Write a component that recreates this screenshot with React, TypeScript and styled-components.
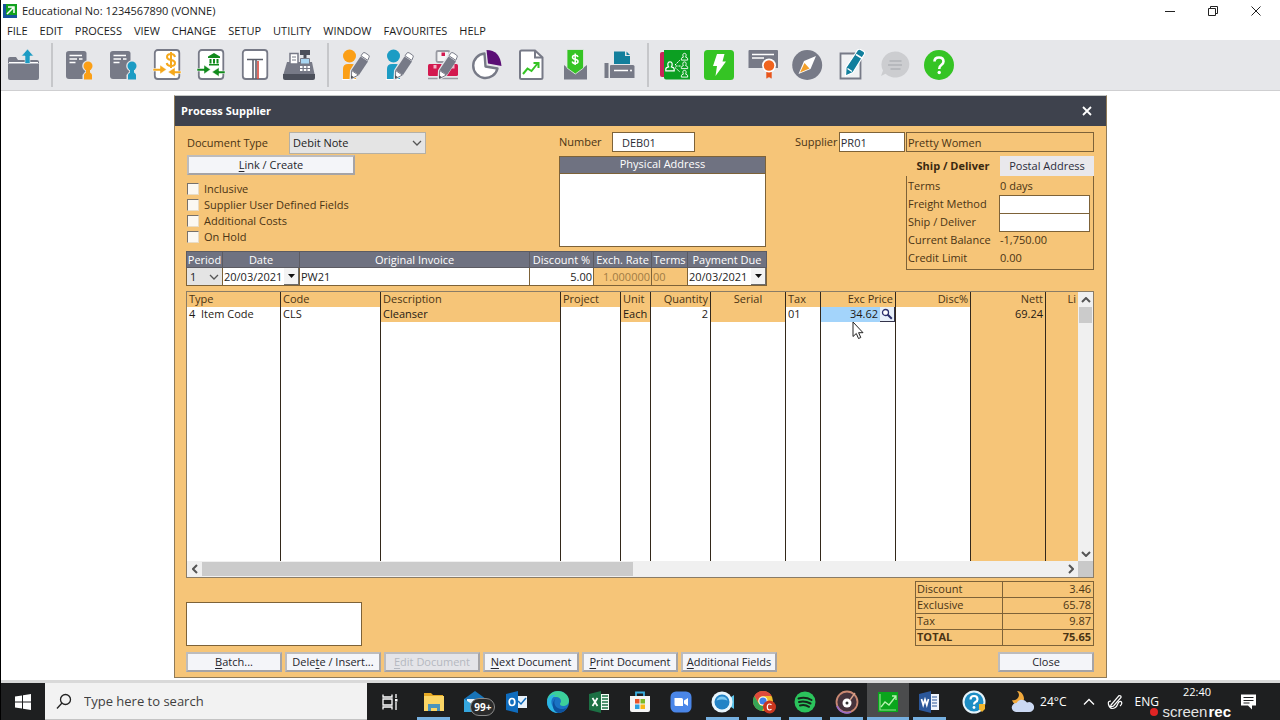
import React from "react";
import styled, { createGlobalStyle, css } from "styled-components";

const color = {
  panel: "#f6c578",
  line: "#7d6238",
  ink: "#4a3414",
  head: "#6f7281",
  slate: "#777a87",
  green: "#35c424",
  teal: "#1c9cc4",
  amber: "#fb9f16",
};

const Global = createGlobalStyle`
  *, *::before, *::after { box-sizing: border-box; }
  body { margin: 0; font: 11px/16px "Open Sans", "Noto Sans", sans-serif; color: #222; background: #fff; }
  button, input, select, textarea { font: inherit; color: inherit; margin: 0; border-radius: 0; }
  button { padding: 0; white-space: nowrap; }
  svg { display: block; flex: none; }
`;

const Page = styled.div`
  min-height: 100vh;
  display: flex;
  flex-direction: column;
  border-left: 1px solid #000;
`;

const TitleBar = styled.header`
  height: 22px;
  display: flex;
  align-items: center;
  padding: 0 3px 0 1px;
`;
const AppTitle = styled.h1`
  margin: 0 auto 0 4px;
  font-size: 11px;
  font-weight: 400;
  color: #222;
`;
const WindowButton = styled.button`
  width: 43px;
  height: 20px;
  border: 0;
  background: none;
  display: grid;
  place-items: center;
`;

const MenuBar = styled.nav`
  height: 18px;
  display: flex;
  align-items: center;
  gap: 12px;
  padding-left: 6px;
`;
const MenuItem = styled.button`
  border: 0;
  background: none;
  color: #1c1c1c;
`;

const Toolbar = styled.div`
  height: 51px;
  display: flex;
  align-items: center;
  background: #e6e7ea;
  border-bottom: 1px solid #cfcfd1;
`;
const ToolGroup = styled.div`
  display: flex;
  padding-right: 6px;
  & + & {
    padding-left: 4px;
    border-left: 2px solid #c6c7ca;
  }
`;
const ToolButton = styled.button`
  width: 44px;
  height: 44px;
  border: 0;
  background: none;
  display: grid;
  place-items: center;
`;

const Workspace = styled.main`
  flex: 1;
  padding: 4px 12px 1px;
`;

const Dialog = styled.section`
  width: 100%;
  max-width: 933px;
  margin: 0 auto;
  background: ${color.panel};
  border: 1px solid #8f7a58;
  border-top-color: #c5c8c6;
  color: ${color.ink};
`;
const DialogHead = styled.div`
  height: 30px;
  padding: 0 13px 0 6px;
  display: flex;
  align-items: center;
  justify-content: space-between;
  background: #3e424d;
  color: #fff;
`;
const DialogTitle = styled.h2`
  margin: 0;
  font-size: 11px;
  font-weight: 700;
`;
const CloseX = styled.button`
  width: 12px;
  height: 20px;
  border: 0;
  background: none;
  display: grid;
  place-items: center;
`;
const DialogBody = styled.div`
  padding: 6px 12px 5px 11px;
`;

const FormArea = styled.div`
  display: flex;
  justify-content: space-between;
`;
const FormMain = styled.div`
  width: 580px;
`;
const FormColumns = styled.div`
  display: flex;
  justify-content: space-between;
  height: 119px;
`;
const DocumentColumn = styled.div`
  width: 240px;
  padding-left: 1px;
`;
const FieldRow = styled.div<{ $height: number }>`
  display: flex;
  align-items: center;
  height: ${(p) => p.$height}px;
`;
const FieldLabel = styled.label<{ $width?: number }>`
  width: ${(p) => (p.$width ? `${p.$width}px` : "auto")};
  white-space: nowrap;
`;

const Drop = styled.span<{ $framed?: boolean }>`
  flex: 1;
  display: grid;
  align-items: center;
  background: #e4e4e4;
  color: #1c1c1c;
  ${(p) => p.$framed && css`border: 1px solid #b5b0a5;`}
  & > * { grid-area: 1 / 1; }
  & > svg { justify-self: end; margin-right: 3px; pointer-events: none; }
`;
const DropSelect = styled.select<{ $height: number }>`
  appearance: none;
  width: 100%;
  height: ${(p) => p.$height}px;
  padding: 0 0 0 3px;
  border: 0;
  background: transparent;
`;

const PushButton = styled.button<{ $width: number }>`
  width: ${(p) => p.$width}px;
  height: 20px;
  line-height: 16px;
  border: 2px solid #bdbcbd;
  border-right-color: #a5a4a7;
  border-bottom-color: #a5a4a7;
  background: #f4f5f9;
  color: #25252c;
  &:disabled { background: #e4e4e8; color: #b4b8c0; }
`;

const Checks = styled.div`
  padding-top: 5px;
`;
const CheckLabel = styled.label`
  display: flex;
  align-items: center;
  gap: 5px;
  height: 16px;
`;
const CheckBox = styled.input`
  appearance: none;
  width: 12px;
  height: 12px;
  margin: 0;
  background: #fbf8f2;
  border: 1px solid #e9dcc5;
  border-top-color: #77716a;
  border-left-color: #77716a;
`;

const AddressColumn = styled.div`
  width: 207px;
`;
const TextField = styled.input<{ $width: number; $indent?: number; $plain?: boolean }>`
  width: ${(p) => p.$width}px;
  height: 20px;
  padding: 0 0 0 ${(p) => p.$indent ?? 1}px;
  border: 1px solid ${color.line};
  background: ${(p) => (p.$plain ? "transparent" : "#fff")};
  color: ${(p) => (p.$plain ? color.ink : "#2b2b33")};
`;
const AddressLabel = styled.label`
  display: block;
  height: 17px;
  margin-top: 4px;
  line-height: 14px;
  text-align: center;
  color: #fff;
  background: ${color.head};
  border: 1px solid ${color.line};
  border-bottom: 0;
`;
const AddressText = styled.textarea`
  display: block;
  width: 100%;
  height: 74px;
  resize: none;
  border: 1px solid ${color.line};
  background: #fff;
`;

const Strip = styled.table`
  width: 100%;
  table-layout: fixed;
  border-collapse: collapse;
  background: #fff;
`;
const StripHead = styled.th`
  height: 16px;
  padding: 0;
  font-weight: 400;
  line-height: 13px;
  color: #fff;
  background: ${color.head};
  border: 1px solid #5c5b62;
  white-space: nowrap;
`;
const StripCell = styled.td<{ $off?: boolean }>`
  height: 18px;
  padding: 0;
  border: 1px solid ${color.line};
  color: ${(p) => (p.$off ? "#a17c44" : "#222")};
  background: ${(p) => (p.$off ? color.panel : "#fff")};
`;
const StripInput = styled.input<{ $end?: boolean }>`
  display: block;
  width: 100%;
  min-width: 0;
  height: 17px;
  padding: 0 1px;
  border: 0;
  background: transparent;
  line-height: 15px;
  text-align: ${(p) => (p.$end ? "right" : "left")};
`;
const DatePicker = styled.div`
  display: flex;
`;
const DateButton = styled.button`
  width: 15px;
  height: 17px;
  flex: none;
  border: 0;
  border-right: 1px solid #6d6d6d;
  border-bottom: 1px solid #6d6d6d;
  background: #f3f3f3;
  display: grid;
  place-items: center;
`;

const SupplierPanel = styled.div`
  width: 299px;
  display: flex;
  flex-direction: column;
  align-items: flex-end;
`;
const SupplierRow = styled.div`
  width: 100%;
  height: 20px;
  display: flex;
  align-items: center;
  justify-content: space-between;
`;
const Tabs = styled.div`
  display: flex;
  width: 188px;
  margin-top: 4px;
`;
const Tab = styled.button<{ $active?: boolean }>`
  flex: 1;
  height: 20px;
  border: 0;
  font-weight: ${(p) => (p.$active ? 700 : 400)};
  color: ${(p) => (p.$active ? "#3a2910" : "#2b2b3a")};
  background: ${(p) => (p.$active ? "transparent" : "#e9e8ec")};
`;
const Details = styled.div`
  width: 188px;
  height: 94px;
  padding: 1px 3px 0 0;
  border: 1px solid ${color.line};
  border-top: 0;
`;
const DetailRow = styled.div`
  height: 18px;
  display: flex;
  align-items: center;
`;
const DetailLabel = styled.label`
  width: 93px;
  padding-left: 1px;
  white-space: nowrap;
`;
const DetailInput = styled.input`
  width: 91px;
  height: 19px;
  border: 1px solid ${color.line};
  background: #fff;
`;

const GridFrame = styled.div`
  margin-top: 5px;
  display: grid;
  grid-template-columns: minmax(0, 1fr) 15px;
  border: 1px solid #8a7c66;
  background: #fff;
`;
const Lines = styled.table`
  width: 100%;
  table-layout: fixed;
  border-collapse: separate;
  border-spacing: 0;
`;
type CellProps = { $end?: boolean; $mid?: boolean; $fill?: string };
const cell = css<CellProps>`
  padding: 0 2px;
  overflow: hidden;
  white-space: pre;
  vertical-align: top;
  font-weight: 400;
  border-right: 1px solid #33281a;
  text-align: ${(p) => (p.$end ? "right" : p.$mid ? "center" : "left")};
  &:last-child { border-right: 0; }
`;
const LineHead = styled.th<CellProps>`
  ${cell}
  height: 15px;
  line-height: 14px;
  color: ${color.ink};
  background: ${color.panel};
`;
const LineCell = styled.td<CellProps>`
  ${cell}
  height: 15px;
  line-height: 14px;
  color: #1f1a14;
  background: ${(p) => p.$fill ?? "#fff"};
`;
const EmptyCell = styled(LineCell)`
  height: 239px;
`;
const PriceCell = styled(LineCell)`
  padding: 0;
  overflow: visible;
  position: relative;
`;
const PriceEdit = styled.div`
  display: flex;
`;
const PriceInput = styled.input`
  width: 100%;
  min-width: 0;
  height: 14px;
  padding: 0 2px 0 0;
  border: 0;
  background: transparent;
  text-align: right;
`;
const LookupButton = styled.button`
  width: 15px;
  height: 15px;
  flex: none;
  border: 0;
  border-right: 1px solid #33334a;
  border-bottom: 1px solid #33334a;
  background: #e8f0fa;
  display: grid;
  place-items: center;
`;
const Pointer = styled.svg`
  position: absolute;
  left: 31px;
  top: 14px;
  z-index: 1;
`;

const VScroll = styled.div`
  display: flex;
  flex-direction: column;
  align-items: center;
  background: #f0f0f0;
`;
const HScroll = styled.div`
  height: 16px;
  display: flex;
  align-items: center;
  background: #f0f0f0;
`;
const ScrollArrow = styled.button`
  width: 15px;
  height: 15px;
  border: 0;
  background: none;
  display: grid;
  place-items: center;
`;
const Thumb = styled.div<{ $vertical?: boolean }>`
  background: #cbcbcb;
  ${(p) => (p.$vertical ? css`width: 13px; height: 16px; margin-bottom: auto;` : css`width: 50%; height: 14px; margin-right: auto;`)}
`;
const HTrack = styled.div`
  flex: 1;
  display: flex;
`;
const ScrollCorner = styled.div`
  background: #c9c9c9;
`;

const Footer = styled.div`
  display: flex;
  justify-content: space-between;
  align-items: flex-end;
  margin-top: 3px;
`;
const NoteBox = styled.textarea`
  display: block;
  width: 176px;
  height: 44px;
  resize: none;
  border: 1px solid ${color.line};
  background: #fff;
`;
const Totals = styled.table`
  width: 179px;
  border-collapse: collapse;
  line-height: 14px;
`;
const TotalName = styled.th<{ $bold?: boolean }>`
  width: 87px;
  padding: 0 0 1px 1px;
  border: 1px solid ${color.line};
  text-align: left;
  font-weight: ${(p) => (p.$bold ? 700 : 400)};
`;
const TotalValue = styled.td<{ $bold?: boolean }>`
  padding: 0 2px 1px 0;
  border: 1px solid ${color.line};
  text-align: right;
  font-weight: ${(p) => (p.$bold ? 700 : 400)};
`;
const ButtonRow = styled.div`
  display: flex;
  gap: 3px;
  margin-top: 6px;
  & > :last-child { margin-left: auto; }
`;

const Taskbar = styled.footer`
  height: 40px;
  display: flex;
  align-items: stretch;
  background: #1e1f20;
  border-top: 3px solid #d9d9d9;
  color: #fff;
`;
const StartButton = styled.button`
  width: 44px;
  border: 0;
  background: none;
  display: grid;
  place-items: center;
`;
const SearchBox = styled.label`
  width: 322px;
  display: flex;
  align-items: center;
  gap: 10px;
  padding-left: 11px;
  background: #f2f2f2;
  border-bottom: 1px solid #c4c4c4;
`;
const SearchInput = styled.input`
  flex: 1;
  min-width: 0;
  border: 0;
  background: none;
  font-size: 13px;
  color: #333;
  &::placeholder { color: #3f3f3f; opacity: 1; }
`;
const TaskApps = styled.div`
  width: 537px;
  display: grid;
  grid-template-columns: repeat(13, 1fr);
`;
const TaskButton = styled.button<{ $open?: boolean; $active?: boolean; $wide?: boolean }>`
  position: relative;
  border: 0;
  width: ${(p) => (p.$wide ? "46px" : "auto")};
  display: grid;
  place-items: center;
  background: ${(p) => (p.$active ? "#4b4c4d" : "none")};
  &::after {
    content: "";
    display: ${(p) => (p.$open ? "block" : "none")};
    position: absolute;
    left: ${(p) => (p.$active ? 0 : 4)}px;
    right: ${(p) => (p.$active ? 0 : 4)}px;
    bottom: 0;
    height: 3px;
    background: #76b0e0;
  }
`;
const MailBadge = styled.span`
  position: absolute;
  left: 16px;
  top: 15px;
  height: 18px;
  padding: 0 3px;
  border: 1px solid #8a8a8a;
  border-radius: 9px;
  background: #2b2b2b;
  font-size: 10px;
  font-weight: 700;
  line-height: 16px;
  color: #fff;
`;
const Tray = styled.div`
  flex: 1;
  display: flex;
  align-items: center;
  justify-content: flex-end;
  position: relative;
  padding-right: 22px;
  font-size: 12px;
`;
const TrayButton = styled.button<{ $gap: number }>`
  border: 0;
  background: none;
  color: #fff;
  display: flex;
  align-items: center;
  gap: 6px;
  margin-right: ${(p) => p.$gap}px;
`;
const Clock = styled.time`
  align-self: flex-start;
  margin-right: 29px;
  line-height: 18px;
  font-size: 11px;
`;
const Watermark = styled.div`
  position: absolute;
  right: 49px;
  bottom: 0;
  display: flex;
  align-items: center;
  font: 15px/17px "Liberation Sans", Arial, sans-serif;
  color: #e4e4e4;
  &::before {
    content: "";
    width: 8px;
    height: 8px;
    margin-right: 4px;
    border-radius: 50%;
    background: #e02424;
  }
  b { margin-left: 1px; color: #fff; }
`;

const Icon = ({ children, size = 32, box = 32 }: { children: React.ReactNode; size?: number; box?: number }) => (
  <svg width={size} height={size} viewBox={`0 0 ${box} ${box}`} fill="none" aria-hidden="true">
    {children}
  </svg>
);
const Chevron = ({ d = "M1 1l4 4 4-4", w = 10, h = 6, bold }: { d?: string; w?: number; h?: number; bold?: boolean }) => (
  <svg width={w} height={h} viewBox={`0 0 ${w} ${h}`} fill="none" stroke="#555" strokeWidth={bold ? 2 : 1.3} aria-hidden="true">
    <path d={d} />
  </svg>
);
const Triangle = () => (
  <svg width="7" height="4" viewBox="0 0 7 4" aria-hidden="true"><path d="M0 0h7L3.500 4z" fill="#111" /></svg>
);

const S = color.slate;
const Pencil = () => (
  <g>
    <path d="M23 4l7.500 5-11.500 17.500-7.500 4 .5-9z" fill="#e6e7ea" stroke="#e6e7ea" strokeWidth="2" />
    <path d="M21.500 7.500l7.500 5-9 13.500-7.500-5z" fill={S} />
    <path d="M22 6.800l1.800-2.600q1-1.200 2.400-.3l3.400 2.200q1.200.9.4 2.200L28.800 11.300z" fill="#fff" stroke={S} strokeWidth="1" />
    <path d="M12.600 21.500l6.700 4.500-6.800 3.600z" fill="#fff" stroke={S} strokeWidth="1" />
    <path d="M12.300 26.500l2.400 1.600-2.500 1.500z" fill="#444" />
  </g>
);
const Contact = ({ tint }: { tint: string }) => (
  <Icon>
    <circle cx="10.500" cy="7" r="6.500" fill={tint} />
    <path d="M4 30V20q0-5 5-5h4q4 0 4 5v10z" fill={tint} />
    <path d="M3 30.500h14" stroke="#fff" />
    <Pencil />
  </Icon>
);
const DocPerson = ({ tint }: { tint: string }) => (
  <Icon>
    <path d="M6 2h15q2.500 0 2.500 2.500V30H6q-3 0-3-3V4.500Q3 2 6 2z" fill={S} />
    <path d="M6.500 6.500h12.500M6.500 10h7.500M16 10h3.500M6.500 13.500h6" stroke="#fff" strokeWidth="1.500" />
    <circle cx="25" cy="17" r="5.800" fill="#e6e7ea" />
    <path d="M19.500 32v-6l4-5h4l3.500 5v6z" fill="#e6e7ea" />
    <circle cx="25" cy="17" r="4.500" fill={tint} />
    <path d="M21 30.500v-4.500q0-1.500 2-2.500v-3h4v3q2 1 2 2.500v4.500z" fill={tint} />
  </Icon>
);
const PageFrame = () => <rect x="3.800" y="1" width="24.500" height="29" rx="3" fill="#fff" stroke={S} strokeWidth="1.800" />;
const TransferArrows = ({ tint }: { tint: string }) => (
  <g fill={tint}>
    <path d="M2 19.500h7v-3.500l6.500 4.500L9 25v-3H2z" stroke="#fff" strokeWidth=".5" />
    <path d="M30 22h-6v-3.500l-7 4.500 7 4.500v-3h6z" stroke="#fff" strokeWidth=".5" />
  </g>
);
const MiniPerson = ({ x, y, s = 1 }: { x: number; y: number; s?: number }) => (
  <path
    transform={`translate(${x} ${y}) scale(${s})`}
    d="M-3.500 4v-1.500q0-1.200 2.300-1.800Q-2-.5-1.800-2 -1.500-3.500 0-3.500T1.800-2Q2-.5 1.200.7 3.500 1.300 3.500 2.500V4z"
    stroke="#fff" strokeWidth="1"
  />
);

const toolGroups: { name: string; art: React.ReactNode }[][] = [
  [
    {
      name: "Open",
      art: (
        <Icon>
          <path d="M1 13V10q0-2 2-2h6l2 3h19q2 0 2 2v1H1z" fill={S} />
          <path d="M2 13h29v1.500H2z" fill="#fff" />
          <path d="M1 14.500h31V29q0 2-2 2H3q-2 0-2-2z" fill={S} />
          <path d="M20.500 0l6 7h-3.500v7.500h-5V7h-3.500z" fill={color.teal} stroke="#e6e7ea" strokeWidth=".6" />
        </Icon>
      ),
    },
  ],
  [
    { name: "Customers", art: <DocPerson tint={color.amber} /> },
    { name: "Suppliers", art: <DocPerson tint={color.teal} /> },
    {
      name: "Cash",
      art: (
        <Icon>
          <PageFrame />
          <path d="M24 8q-.5-3-4-3-4 0-4 3 0 2.300 4 3t4 3q0 3-4 3-3.700 0-4.300-3M20 3v16" stroke="#f5a81c" strokeWidth="2" />
          <TransferArrows tint="#f5a81c" />
        </Icon>
      ),
    },
    {
      name: "Bank",
      art: (
        <Icon>
          <PageFrame />
          <path d="M19 4l6 3.500v1.500H13V7.500zM14 15h10v1.500H14zM14.500 10h2v4.500h-2zM18 10h2v4.500h-2zM21.500 10h2v4.500h-2z" fill="#118a1c" />
          <TransferArrows tint="#118a1c" />
        </Icon>
      ),
    },
    {
      name: "Journal",
      art: (
        <Icon>
          <PageFrame />
          <path d="M8 10.500h16M14 11v19M17 11v19" stroke="#5d606b" strokeWidth="1.600" />
          <path d="M19 12v18" stroke="#d8463a" strokeWidth="1.600" />
        </Icon>
      ),
    },
    {
      name: "Point of Sale",
      art: (
        <Icon>
          <path d="M17 1h10v5h-3.500v4h-3V6H17z" fill="#4c505b" />
          <path d="M4 13h25l2.500 12h-31z" fill={S} />
          <path d="M7 4.500h8V15H7z" fill="#fff" stroke={S} strokeWidth="1.500" />
          <path d="M9 8h4M9 11h4" stroke={S} />
          <path d="M17.500 9.500h9V15h-9z" fill="#a8d6f2" stroke={S} />
          <path d="M17 18h2.500M20.800 18h2.500M24.500 18h2.500M17 21h2.500M20.800 21h2.500M24.500 21h2.500" stroke="#fff" strokeWidth="2" />
          <path d="M0 25h32v4q0 2-2 2H2q-2 0-2-2z" fill="#4c505b" />
        </Icon>
      ),
    },
  ],
  [
    { name: "Edit Customer", art: <Contact tint={color.amber} /> },
    { name: "Edit Supplier", art: <Contact tint={color.teal} /> },
    {
      name: "Edit Inventory",
      art: (
        <Icon>
          <rect x="9.500" y="2" width="13" height="11" rx="1.500" fill="#f4f4f5" stroke="#999ba3" strokeWidth="1.800" />
          <path d="M14.500 3.500h3.500v3.500h-3.500z" fill="#d3194f" />
          <rect x="1" y="15" width="14.500" height="12" rx="1.500" fill="#d3194f" />
          <rect x="16.500" y="15" width="14.500" height="12" rx="1.500" fill="#d3194f" />
          <path d="M6.500 16h3v3.500h-3zM24.500 16h3v3.500h-3z" fill="#f3b3c6" />
          <path d="M1 29.500h30" stroke="#999ba3" strokeWidth="1.500" />
          <Pencil />
        </Icon>
      ),
    },
    {
      name: "Analysis",
      art: (
        <Icon>
          <path d="M13.500 4.500A12.300 12.300 0 1 0 26.500 19.500L14.500 17.500z" fill="#fff" stroke={S} strokeWidth="2.400" strokeLinejoin="round" />
          <path d="M15.500 1Q29 1 30.500 17L17 14.500z" fill="#5b0e75" />
        </Icon>
      ),
    },
    {
      name: "Reports",
      art: (
        <Icon>
          <path d="M5 3q0-1.500 1.500-1.500H20l7.500 7V28.500q0 1.500-1.500 1.500H6.500Q5 30 5 28.500z" fill="#fff" stroke={S} strokeWidth="2" />
          <path d="M20 2v6.500h7" stroke={S} strokeWidth="2" />
          <path d="M8 25l4.500-5.500 4 2.500 6-7.500M18.500 14h5v5" stroke={color.green} strokeWidth="2" />
        </Icon>
      ),
    },
    {
      name: "Receive Payment",
      art: (
        <Icon>
          <path d="M5 16l11 9 12-9v14.500H5z" fill={S} />
          <path d="M8 .5h16.500V19l-8.200 6L8 19z" fill={color.green} stroke="#e6e7ea" strokeWidth=".8" />
          <path d="M19 8q-.5-1.800-2.800-1.800-2.700 0-2.700 2 0 1.600 2.700 2.100t2.800 2.200q0 2-2.800 2-2.500 0-3-2M16.200 4.500V16" stroke="#fff" strokeWidth="1.500" />
        </Icon>
      ),
    },
    {
      name: "Print",
      art: (
        <Icon>
          <path d="M11 2.500h11V7h5v8H11z" fill="#137f9c" />
          <path d="M23.500 2.500L27 6h-3.500z" fill="#137f9c" />
          <path d="M8 16h22q1.500 0 1.500 1.500V29H7V17q0-1 1-1z" fill={S} />
          <path d="M1.500 14H5.500V29h-4z" fill={S} />
          <path d="M11 21.500h14" stroke="#fff" strokeWidth="1.500" />
          <circle cx="28" cy="21.500" r="1" fill="#fff" />
        </Icon>
      ),
    },
  ],
  [
    {
      name: "Contacts",
      art: (
        <Icon>
          <path d="M6 3H3Q1 3 1 5v21q0 2 2 2h3z" fill="#c92458" />
          <path d="M5 1h26v29.500H7q-2 0-2-2z" fill="#0c9f22" />
          <path d="M16 16l5-5M16.500 17h5M16 18.500l5 4.500" stroke="#fff" strokeDasharray="2 1" />
          <MiniPerson x={11} y={17} s={1.2} />
          <MiniPerson x={25.5} y={7.5} s={0.9} />
          <MiniPerson x={25.5} y={16} s={0.9} />
          <MiniPerson x={25.5} y={24.5} s={0.9} />
        </Icon>
      ),
    },
    {
      name: "Quick Launch",
      art: (
        <Icon>
          <rect x="1" y="1" width="30" height="30" rx="3.500" fill={color.green} />
          <path d="M14 5h7.500l-2 7.500h3.500L12.500 27l1.500-10h-4z" fill="#fff" />
        </Icon>
      ),
    },
    {
      name: "Licence",
      art: (
        <Icon>
          <path d="M2.500 1H30q1 0 1 1v17H1.500V2q0-1 1-1z" fill={S} />
          <path d="M5 5.500h22M5 9h12" stroke="#fff" strokeWidth="1.500" />
          <path d="M19 20h6v10l-3-1.500-3 1.500z" fill="#e8541b" stroke="#e6e7ea" strokeWidth=".6" />
          <circle cx="22" cy="16.500" r="7" fill="#fff" />
          <circle cx="22" cy="16.500" r="5.300" fill="#f0641e" />
        </Icon>
      ),
    },
    {
      name: "Navigator",
      art: (
        <Icon>
          <circle cx="16.200" cy="16" r="15" fill={S} />
          <path d="M25 7L19.500 20 7.500 25l5.500-13z" fill="#fff" />
          <path d="M13.500 14l5 5.500-9.500 4z" fill="#f3a02a" />
        </Icon>
      ),
    },
    {
      name: "Notes",
      art: (
        <Icon>
          <path d="M5.500 4.500h20v25h-20z" fill="#f1f2f4" stroke={S} strokeWidth="1.800" />
          <path d="M20 5l2.500-4q1.500-1.500 3-.5l3 1.800q1.800 1.200.8 3L18 23.500 10.500 27l.5-8.500z" fill="#117f9d" stroke="#fff" strokeWidth="1.200" />
          <path d="M21 5.500l6.500 4M12.500 19.500l4.500 3" stroke="#fff" strokeWidth="1.500" />
        </Icon>
      ),
    },
    {
      name: "Messages",
      art: (
        <Icon>
          <path d="M16 2.500a14 13 0 1 1-9.500 22.300L2 27l2-5.500A14 13 0 0 1 16 2.500z" fill="#cccdd0" />
          <path d="M10.500 12h12M9 16h14M11.500 20h10" stroke="#b0b2b7" strokeWidth="1.400" />
        </Icon>
      ),
    },
    {
      name: "Help",
      art: (
        <Icon>
          <circle cx="16" cy="16" r="15" fill={color.green} />
          <path d="M11.500 12.500Q11.500 8.500 16 8.500t4.500 4q0 2-2.200 3.500T16.200 20" stroke="#fff" strokeWidth="2.600" />
          <circle cx="16.200" cy="23.500" r="1.700" fill="#fff" />
        </Icon>
      ),
    },
  ],
];

const OfficeTile = ({ tint, page, mark }: { tint: string; page: React.ReactNode; mark: string }) => (
  <Icon size={24} box={24}>
    {page}
    <path d="M2 4l12-3v22L2 20z" fill={tint} />
    <path d={mark} stroke="#fff" strokeWidth="1.700" />
  </Icon>
);

const taskApps: { name: string; art: React.ReactNode; open?: boolean; active?: boolean; badge?: string }[] = [
  {
    name: "File Explorer", open: true,
    art: (
      <Icon size={24} box={24}>
        <path d="M2 3h7l2 2h10v5H2z" fill="#e5a823" />
        <path d="M2 6h20v15H2z" fill="#fbd565" />
        <path d="M6 14h12v7h-3v-3H9v3H6z" fill="#4a94bd" />
      </Icon>
    ),
  },
  {
    name: "Mail", badge: "99+",
    art: (
      <Icon size={24} box={24}>
        <path d="M1 9l11-8 11 8v13H1z" fill="#1874b8" />
        <path d="M4 9h16v8H4z" fill="#e9f3fa" />
        <path d="M1 9l11 7 11-7v13H1z" fill="#35a6de" />
      </Icon>
    ),
  },
  {
    name: "Outlook",
    art: (
      <OfficeTile
        tint="#0f6cbd"
        page={<g><path d="M12 6h11v12H12z" fill="#e8f1fa" /><path d="M14 11l3 3 5-6" stroke="#0f6cbd" strokeWidth="1.500" /></g>}
        mark="M8 8.500c-2 0-2.800 1.700-2.800 3.500S6 15.500 8 15.500s2.800-1.700 2.800-3.500S10 8.500 8 8.500z"
      />
    ),
  },
  {
    name: "Edge",
    art: (
      <Icon size={24} box={24}>
        <circle cx="12" cy="12" r="11" fill="#1a73c4" />
        <path d="M1 12C1 5 6 1 12 1s11 4.500 11 9.500c0 4-3 5.500-6 5.500-2 0-3-1-3-2s1-1.500 1-3c0-2-2-4-5-4-4 0-8 2-9 5z" fill="#3ccf9a" />
        <path d="M1 12C2 6 6 4 10 5c-4 2-5.500 6-4 10 1 3 4 6 8 7.700C7 24 1 19 1 12z" fill="#2cb5e4" />
        <path d="M10 8c-3 3-2 9 3 10.500 3 1 6 .5 8-1-2 4-6 5.500-9 5.500C6 21 5 12 10 8z" fill="#0d529e" />
      </Icon>
    ),
  },
  {
    name: "Excel",
    art: (
      <OfficeTile
        tint="#1c7044"
        page={<g><path d="M12 4h10v16H12z" fill="#f3faf5" /><path d="M15 6h6M15 9h6M15 12h6M15 15h6M15 18h6" stroke="#1c7044" strokeWidth="1.500" /></g>}
        mark="M5.500 8l5 8M10.500 8l-5 8"
      />
    ),
  },
  {
    name: "Microsoft Store",
    art: (
      <Icon size={24} box={24}>
        <path d="M8 6V2.500h8V6" stroke="#3aaee0" strokeWidth="1.800" />
        <path d="M2 6h20v14q0 2-2 2H4q-2 0-2-2z" fill="#f5f5f5" />
        <path d="M7 9h4.500v4.500H7z" fill="#e9532a" /><path d="M12.500 9H17v4.500h-4.500z" fill="#7bb927" />
        <path d="M7 14.500h4.500V19H7z" fill="#2a9fe0" /><path d="M12.500 14.500H17V19h-4.500z" fill="#f7b718" />
      </Icon>
    ),
  },
  {
    name: "Zoom",
    art: (
      <Icon size={24} box={24}>
        <rect x="1.500" y="1.500" width="21" height="21" rx="5.500" fill="#4a86e8" />
        <path d="M5.500 8h7q1.500 0 1.500 1.500V16H7q-1.500 0-1.500-1.500zM15 10.500L19 8v8l-4-2.500z" fill="#fff" />
      </Icon>
    ),
  },
  {
    name: "Meetings", open: true,
    art: (
      <Icon size={24} box={24}>
        <path d="M17 9l6-4v14l-6-4z" fill="#5cc3ea" />
        <circle cx="11" cy="12" r="10.500" fill="#e9f6fd" />
        <circle cx="11" cy="12" r="7.500" fill="#2383c6" />
        <path d="M5.500 10.500a5.800 5.800 0 0 1 11 0q-5.500-2-11 0z" fill="#7cc8f0" />
      </Icon>
    ),
  },
  {
    name: "Chrome", open: true,
    art: (
      <Icon size={24} box={24}>
        <circle cx="11" cy="11" r="10" fill="#f2bd2d" />
        <path d="M2.300 6A10 10 0 0 1 19.700 6H11a5 5 0 0 0-4.300 7.500z" fill="#de4a3c" />
        <path d="M2.300 6l4.400 7.500A5 5 0 0 0 13 15.500L10 21A10 10 0 0 1 2.300 6z" fill="#36a457" />
        <circle cx="11" cy="11" r="4.600" fill="#fff" />
        <circle cx="11" cy="11" r="3.600" fill="#3f7fe8" />
        <circle cx="17.500" cy="17" r="6.500" fill="#c9361f" />
        <path d="M19.500 15q-.8-1-2-1-2.200 0-2.200 3t2.200 3q1.200 0 2-1" stroke="#fff" strokeWidth="1.200" />
      </Icon>
    ),
  },
  {
    name: "Spotify", open: true,
    art: (
      <Icon size={24} box={24}>
        <circle cx="12" cy="12" r="10.500" fill="#2bc45c" />
        <path d="M5.500 8.500q7-2 13 1.500M6 12q6-1.500 11.500 1.500M7 15.500q5-1.200 9 1.300" stroke="#16261b" strokeWidth="2" strokeLinecap="round" />
      </Icon>
    ),
  },
  {
    name: "Music", open: true,
    art: (
      <Icon size={24} box={24}>
        <circle cx="12" cy="12" r="10.500" fill="#46333c" stroke="#c98872" strokeWidth="1.800" />
        <path d="M2 16A10.500 10.500 0 0 0 16 22" stroke="#9a6bc4" strokeWidth="1.800" />
        <circle cx="12" cy="13" r="4.500" fill="#fff" />
        <circle cx="12" cy="13" r="1.500" fill="#333" />
        <path d="M15 10l5-7" stroke="#d9a58c" strokeWidth="1.300" />
      </Icon>
    ),
  },
  {
    name: "Accounting", open: true, active: true,
    art: (
      <Icon size={24} box={24}>
        <path d="M2 2h20v20H2z" fill="#0aa51c" />
        <path d="M4 4v16h16" stroke="#8fe58d" strokeWidth="1.200" />
        <path d="M5 17l4-5 4 3 7-9M16 6h4v4" stroke="#b7f3b0" strokeWidth="1.300" />
      </Icon>
    ),
  },
  {
    name: "Word", open: true,
    art: (
      <OfficeTile
        tint="#2b579a"
        page={<g><path d="M12 4h10v16H12z" fill="#eef3fb" /><path d="M15 7h5M15 10h5M15 13h5M15 16h5" stroke="#2b579a" strokeWidth="1.200" /></g>}
        mark="M4.500 9l1.700 6L8 9.500 9.800 15l1.700-6"
      />
    ),
  },
];

const Key = styled.u`
  text-underline-offset: 2px;
`;

const menus = ["FILE", "EDIT", "PROCESS", "VIEW", "CHANGE", "SETUP", "UTILITY", "WINDOW", "FAVOURITES", "HELP"];
const stripColumns: [string, number][] = [
  ["Period", 36], ["Date", 77], ["Original Invoice", 230], ["Discount %", 64],
  ["Exch. Rate", 58], ["Terms", 36], ["Payment Due", 79],
];
type Column = { title: string; width?: number; value: string; end?: boolean; mid?: boolean; locked?: boolean; band?: boolean };
const columns: Column[] = [
  { title: "Type", width: 94, value: "4  Item Code" },
  { title: "Code", width: 100, value: "CLS" },
  { title: "Description", width: 180, value: "Cleanser", locked: true },
  { title: "Project", width: 60, value: "" },
  { title: "Unit", width: 30, value: "Each", locked: true },
  { title: "Quantity", width: 60, value: "2", end: true },
  { title: "Serial", width: 75, value: "", mid: true, locked: true },
  { title: "Tax", width: 35, value: "01" },
  { title: "Exc Price", width: 75, value: "34.62", end: true },
  { title: "Disc%", width: 75, value: "", end: true },
  { title: "Nett", width: 75, value: "69.24", end: true, band: true },
  { title: "Li", value: "", end: true, band: true },
];
const totals = [["Discount", "3.46"], ["Exclusive", "65.78"], ["Tax", "9.87"], ["TOTAL", "75.65"]];

export default function App() {
  return (
    <Page>
      <Global />
      <TitleBar>
        <Icon size={16} box={16}>
          <path d="M1 1h14v14H1z" fill="#12a11f" />
          <path d="M1 1h3v14H1zM1 12h14v3H1z" fill="#17549a" />
          <path d="M5 11l6-6M6 4h6v6" stroke="#fff" strokeWidth="1.500" />
        </Icon>
        <AppTitle>Educational No: 1234567890 (VONNE)</AppTitle>
        <WindowButton aria-label="Minimize"><Icon size={12} box={12}><path d="M1 6.500h10" stroke="#222" /></Icon></WindowButton>
        <WindowButton aria-label="Restore">
          <Icon size={12} box={12}><path d="M1.500 3.500h7v7h-7zM3.500 3.500v-2h7v7h-2" stroke="#222" /></Icon>
        </WindowButton>
        <WindowButton aria-label="Close window"><Icon size={12} box={12}><path d="M1.500 1.500l9 9M10.500 1.500l-9 9" stroke="#222" /></Icon></WindowButton>
      </TitleBar>
      <MenuBar>
        {menus.map((m) => <MenuItem key={m}>{m}</MenuItem>)}
      </MenuBar>
      <Toolbar>
        {toolGroups.map((group, i) => (
          <ToolGroup key={i}>
            {group.map((tool) => <ToolButton key={tool.name} aria-label={tool.name}>{tool.art}</ToolButton>)}
          </ToolGroup>
        ))}
      </Toolbar>

      <Workspace>
        <Dialog>
          <DialogHead>
            <DialogTitle>Process Supplier</DialogTitle>
            <CloseX aria-label="Close dialog"><Icon size={10} box={10}><path d="M1 1l8 8M9 1L1 9" stroke="#fff" strokeWidth="1.800" /></Icon></CloseX>
          </DialogHead>
          <DialogBody>
            <FormArea>
              <FormMain>
                <FormColumns>
                  <DocumentColumn>
                    <FieldRow $height={22}>
                      <FieldLabel htmlFor="doc-type" $width={102}>Document Type</FieldLabel>
                      <Drop $framed>
                        <DropSelect id="doc-type" $height={20}><option>Debit Note</option></DropSelect>
                        <Chevron />
                      </Drop>
                    </FieldRow>
                    <FieldRow $height={22}>
                      <PushButton $width={168}><Key>L</Key>ink / Create</PushButton>
                    </FieldRow>
                    <Checks>
                      {["Inclusive", "Supplier User Defined Fields", "Additional Costs", "On Hold"].map((t) => (
                        <CheckLabel key={t}><CheckBox type="checkbox" />{t}</CheckLabel>
                      ))}
                    </Checks>
                  </DocumentColumn>
                  <AddressColumn>
                    <FieldRow $height={20}>
                      <FieldLabel htmlFor="number" $width={53}>Number</FieldLabel>
                      <TextField id="number" $width={83} $indent={9} defaultValue="DEB01" />
                    </FieldRow>
                    <AddressLabel htmlFor="address">Physical Address</AddressLabel>
                    <AddressText id="address" />
                  </AddressColumn>
                </FormColumns>
                <Strip>
                  <colgroup>{stripColumns.map(([n, w]) => <col key={n} width={w} />)}</colgroup>
                  <thead><tr>{stripColumns.map(([n]) => <StripHead key={n}>{n}</StripHead>)}</tr></thead>
                  <tbody>
                    <tr>
                      <StripCell>
                        <Drop>
                          <DropSelect $height={17} aria-label="Period"><option>1</option></DropSelect>
                          <Chevron />
                        </Drop>
                      </StripCell>
                      <StripCell>
                        <DatePicker>
                          <StripInput aria-label="Date" defaultValue="20/03/2021" />
                          <DateButton aria-label="Pick date"><Triangle /></DateButton>
                        </DatePicker>
                      </StripCell>
                      <StripCell><StripInput aria-label="Original Invoice" defaultValue="PW21" /></StripCell>
                      <StripCell><StripInput $end aria-label="Discount %" defaultValue="5.00" /></StripCell>
                      <StripCell $off><StripInput $end aria-label="Exchange rate" defaultValue="1.000000" readOnly /></StripCell>
                      <StripCell $off><StripInput aria-label="Terms" defaultValue="00" readOnly /></StripCell>
                      <StripCell>
                        <DatePicker>
                          <StripInput aria-label="Payment Due" defaultValue="20/03/2021" />
                          <DateButton aria-label="Pick payment date"><Triangle /></DateButton>
                        </DatePicker>
                      </StripCell>
                    </tr>
                  </tbody>
                </Strip>
              </FormMain>

              <SupplierPanel>
                <SupplierRow>
                  <FieldLabel htmlFor="supplier">Supplier</FieldLabel>
                  <TextField id="supplier" $width={66} defaultValue="PR01" />
                  <TextField $width={188} $plain aria-label="Supplier name" defaultValue="Pretty Women" readOnly />
                </SupplierRow>
                <Tabs>
                  <Tab $active>Ship / Deliver</Tab>
                  <Tab>Postal Address</Tab>
                </Tabs>
                <Details>
                  <DetailRow><DetailLabel as="span">Terms</DetailLabel>0 days</DetailRow>
                  <DetailRow><DetailLabel htmlFor="freight">Freight Method</DetailLabel><DetailInput id="freight" /></DetailRow>
                  <DetailRow><DetailLabel htmlFor="ship">Ship / Deliver</DetailLabel><DetailInput id="ship" /></DetailRow>
                  <DetailRow><DetailLabel as="span">Current Balance</DetailLabel>-1,750.00</DetailRow>
                  <DetailRow><DetailLabel as="span">Credit Limit</DetailLabel>0.00</DetailRow>
                </Details>
              </SupplierPanel>
            </FormArea>

            <GridFrame>
              <Lines>
                <colgroup>{columns.map((c) => <col key={c.title} width={c.width} />)}</colgroup>
                <thead>
                  <tr>{columns.map((c) => <LineHead key={c.title} $end={c.end} $mid={c.mid}>{c.title}</LineHead>)}</tr>
                </thead>
                <tbody>
                  <tr>
                    {columns.map((c) =>
                      c.title === "Exc Price" ? (
                        <PriceCell key={c.title} $fill="#a3d4fb">
                          <PriceEdit>
                            <PriceInput aria-label="Exc Price" defaultValue={c.value} />
                            <LookupButton aria-label="Look up price">
                              <Icon size={12} box={12}>
                                <circle cx="4.500" cy="4.500" r="3" fill="#fff" stroke="#2b2f6b" strokeWidth="1.300" />
                                <path d="M6.800 6.800l4 4" stroke="#2b2f6b" strokeWidth="2" />
                              </Icon>
                            </LookupButton>
                          </PriceEdit>
                          <Pointer width="12" height="19" viewBox="0 0 12 19" aria-hidden="true">
                            <path d="M1 1v14.500l3.300-3 2.200 5 2.300-1-2.200-4.800H11z" fill="#fff" stroke="#222" />
                          </Pointer>
                        </PriceCell>
                      ) : (
                        <LineCell key={c.title} $end={c.end} $fill={c.locked || c.band ? color.panel : undefined}>{c.value}</LineCell>
                      )
                    )}
                  </tr>
                  <tr>{columns.map((c) => <EmptyCell key={c.title} $fill={c.band ? color.panel : undefined} />)}</tr>
                </tbody>
              </Lines>
              <VScroll>
                <ScrollArrow aria-label="Scroll up"><Chevron bold d="M1 5l4-4 4 4" /></ScrollArrow>
                <Thumb $vertical />
                <ScrollArrow aria-label="Scroll down"><Chevron bold /></ScrollArrow>
              </VScroll>
              <HScroll>
                <ScrollArrow aria-label="Scroll left"><Chevron bold w={6} h={10} d="M5 1L1 5l4 4" /></ScrollArrow>
                <HTrack><Thumb /></HTrack>
                <ScrollArrow aria-label="Scroll right"><Chevron bold w={6} h={10} d="M1 1l4 4-4 4" /></ScrollArrow>
              </HScroll>
              <ScrollCorner />
            </GridFrame>

            <Footer>
              <NoteBox aria-label="Notes" />
              <Totals>
                <tbody>
                  {totals.map(([n, v]) => (
                    <tr key={n}>
                      <TotalName scope="row" $bold={n === "TOTAL"}>{n}</TotalName>
                      <TotalValue $bold={n === "TOTAL"}>{v}</TotalValue>
                    </tr>
                  ))}
                </tbody>
              </Totals>
            </Footer>
            <ButtonRow>
              <PushButton $width={96}><Key>B</Key>atch...</PushButton>
              <PushButton $width={96}>Dele<Key>t</Key>e / Insert...</PushButton>
              <PushButton $width={96} disabled><Key>E</Key>dit Document</PushButton>
              <PushButton $width={96}><Key>N</Key>ext Document</PushButton>
              <PushButton $width={96}><Key>P</Key>rint Document</PushButton>
              <PushButton $width={96}><Key>A</Key>dditional Fields</PushButton>
              <PushButton $width={96}>Close</PushButton>
            </ButtonRow>
          </DialogBody>
        </Dialog>
      </Workspace>

      <Taskbar>
        <StartButton aria-label="Start">
          <Icon size={16} box={16}><path d="M0 2.500l7-1v6H0zM8 1.300L16 0v7.500H8zM0 8.500h7v6l-7-1zM8 8.500h8V16l-8-1.300z" fill="#fff" /></Icon>
        </StartButton>
        <SearchBox>
          <Icon size={16} box={16}><circle cx="9.500" cy="6.500" r="5" stroke="#222" strokeWidth="1.300" /><path d="M6 10l-5 5.500" stroke="#222" strokeWidth="1.300" /></Icon>
          <SearchInput type="text" placeholder="Type here to search" />
        </SearchBox>
        <TaskButton $wide aria-label="Task View">
          <Icon size={18} box={18}>
            <path d="M2 1.500v2.500h9V1.500M2 16.500V14h9v2.500M2 6h9v6H2zM15 1v4M15 9v8" stroke="#fff" strokeWidth="1.300" />
            <path d="M14 6h2.500v2.500H14z" fill="#fff" />
          </Icon>
        </TaskButton>
        <TaskApps>
          {taskApps.map((a) => (
            <TaskButton key={a.name} aria-label={a.name} $open={a.open} $active={a.active}>
              {a.art}
              {a.badge && <MailBadge>{a.badge}</MailBadge>}
            </TaskButton>
          ))}
        </TaskApps>
        <Tray>
          <TrayButton $gap={24} aria-label="Tips">
            <Icon size={24} box={24}>
              <circle cx="12" cy="12" r="10.500" fill="#1d8dc4" stroke="#e6f4fb" strokeWidth="2" />
              <path d="M8.500 9.500q0-3.500 3.500-3.500t3.500 3.200q0 2-2 2.800-1.500.8-1.500 2.500" stroke="#fff" strokeWidth="2.200" />
              <circle cx="12" cy="17.500" r="1.400" fill="#fff" />
              <path d="M17 14h6v5l-3 3-3-3z" fill="#f3b62e" />
            </Icon>
          </TrayButton>
          <TrayButton $gap={16}>
            <Icon size={24} box={24}>
              <path d="M7 1q4 4 0 8-3 2-5 1 2 6 8 4 6-3 3-9-2-4-6-4z" fill="#f2a93c" />
              <path d="M6 22a4.500 4.500 0 0 1 .5-9 6 6 0 0 1 10.500-.5A5 5 0 1 1 18.500 22z" fill="#ccd9f3" />
            </Icon>
            24°C
          </TrayButton>
          <TrayButton $gap={12} aria-label="Show hidden icons">
            <Icon size={12} box={12}><path d="M1 8.500l5-5 5 5" stroke="#fff" strokeWidth="1.300" /></Icon>
          </TrayButton>
          <TrayButton $gap={12} aria-label="Pen">
            <Icon size={16} box={16}><path d="M4 11L12 1.500q2.500 0 2 2L6.500 12 3.500 13zM4 7q-3.500 0-2.500 3.500T5 14.500q4 0 5.500-4t3.500-3q2 2-1 4.500" stroke="#fff" strokeWidth="1.200" /></Icon>
          </TrayButton>
          <TrayButton $gap={24}>ENG</TrayButton>
          <Clock>22:40</Clock>
          <TrayButton $gap={0} aria-label="Notifications">
            <Icon size={18} box={18}>
              <path d="M1 1.500h15v11h-4v4l-4-4H1z" fill="#fff" />
              <path d="M3.500 4.500h10M3.500 7.500h10M3.500 10h6" stroke="#1e1f20" strokeWidth="1.200" />
            </Icon>
          </TrayButton>
          <Watermark>screen<b>rec</b></Watermark>
        </Tray>
      </Taskbar>
    </Page>
  );
}
